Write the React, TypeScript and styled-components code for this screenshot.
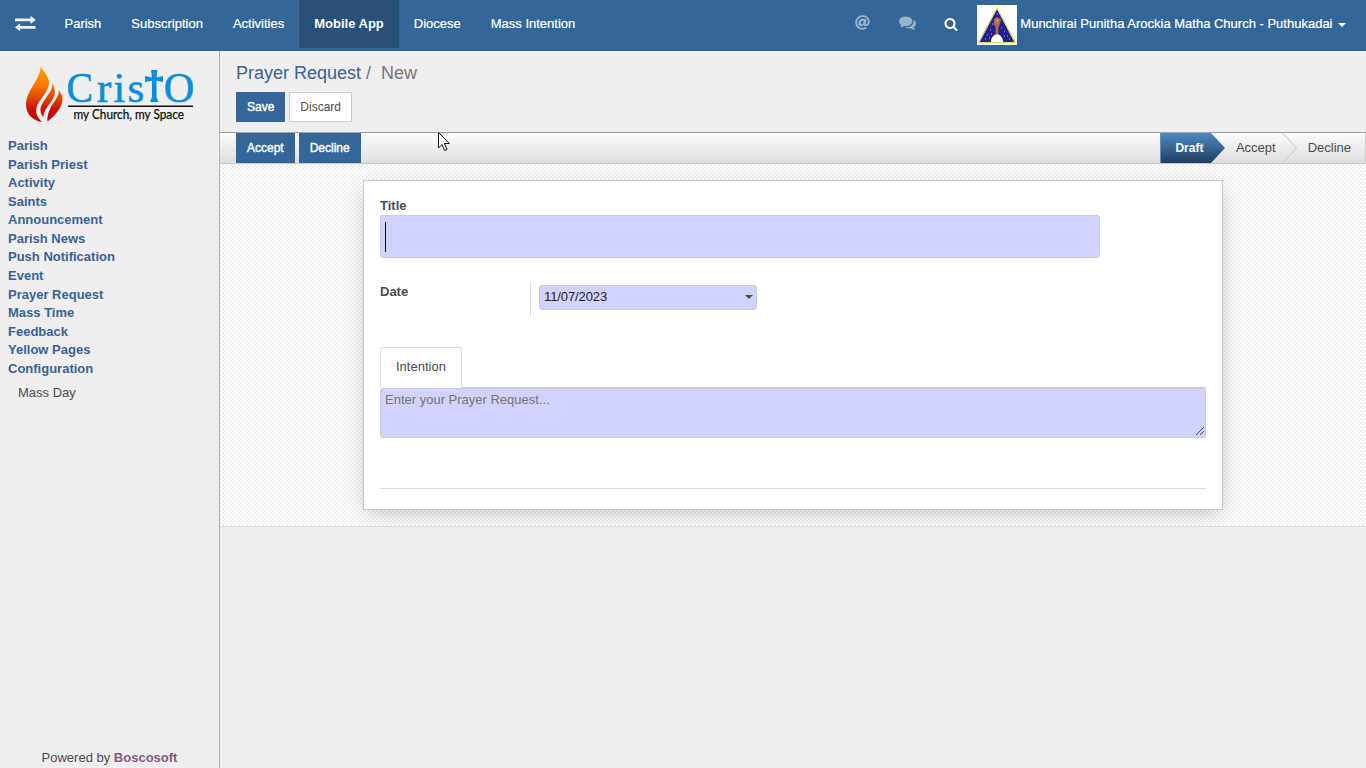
import React from "react";
import styled, { createGlobalStyle, css } from "styled-components";
import { FaAt } from "react-icons/fa";

const Global = createGlobalStyle`
  *, *::before, *::after { box-sizing: border-box; }
  body {
    margin: 0;
    overflow: hidden;
    background: #f0eeee;
    font: 13px/1.42857 "Liberation Sans", Arial, sans-serif;
    color: #4c4c4c;
  }
`;

const Page = styled.div`
  display: flex;
  flex-direction: column;
  height: 768px;
`;

const Header = styled.header`
  display: flex;
  align-items: flex-start;
  height: 51px;
  flex: none;
  background: #336699;
  color: #fff;
`;

const SwitchButton = styled.div`
  display: flex;
  padding: 16px 13.5px 0 15px;
  height: 48px;
`;

const NavItem = styled.a<{ $active?: boolean }>`
  height: 48px;
  padding: 0 15px;
  line-height: 47px;
  white-space: nowrap;
  -webkit-text-stroke: ${(p) => (p.$active ? 0 : 0.2)}px;
  ${(p) => p.$active && css`background: #285078; font-weight: bold;`}
`;

const Tools = styled.div`
  display: flex;
  align-items: flex-start;
  margin-left: auto;
`;

const Tool = styled.span<{ $dim?: boolean; $gap: number; $top: number }>`
  display: flex;
  margin-right: ${(p) => p.$gap}px;
  padding-top: ${(p) => p.$top}px;
  opacity: ${(p) => (p.$dim ? 0.5 : 1)};
`;

const Avatar = styled.svg`
  display: block;
  margin-top: 5px;
`;

const UserName = styled.span`
  padding-left: 3.5px;
  line-height: 47px;
  white-space: nowrap;
  -webkit-text-stroke: 0.2px;
`;

const Caret = styled.span<{ $color: string }>`
  width: 0;
  height: 0;
  border: 4px solid transparent;
  border-top-color: ${(p) => p.$color};
  border-bottom: 0;
`;

const UserCaret = styled(Caret)`
  margin: 23px 20px 0 5.5px;
`;

const Body = styled.div`
  display: flex;
  flex: 1;
  min-height: 0;
`;

const Sidebar = styled.aside`
  display: flex;
  flex-direction: column;
  width: 220px;
  flex: none;
  border-right: 1px solid #afafb6;
`;

const Logo = styled.svg`
  display: block;
  flex: none;
`;

const Menu = styled.nav`
  display: flex;
  flex-direction: column;
  padding: 2px 8px 0;
`;

const MenuItem = styled.a`
  height: 18.57px;
  color: #36639a;
  font-weight: bold;
`;

const SubItem = styled.a`
  padding: 6px 10px 0;
`;

const Powered = styled.footer`
  margin-top: auto;
  text-align: center;
  b { color: #875a7b; }
`;

const Main = styled.main`
  flex: 1;
  display: flex;
  flex-direction: column;
  min-width: 0;
`;

const ControlPanel = styled.div`
  height: 82px;
  padding: 9px 16px 0;
  border-bottom: 1px solid #a2a2a2;
`;

const Breadcrumb = styled.div`
  display: flex;
  font-size: 18px;
  line-height: 26px;
  color: #777;
  white-space: pre;
  a { color: #36639a; }
`;

const Buttons = styled.div`
  display: flex;
  gap: 4px;
`;

const PanelButtons = styled(Buttons)`
  margin-top: 6px;
`;

const Button = styled.button<{ $plain?: boolean }>`
  height: 30px;
  padding: 0 10px;
  border: 1px solid ${(p) => (p.$plain ? "#ccc" : "#336699")};
  background: ${(p) => (p.$plain ? "#fff" : "#336699")};
  color: ${(p) => (p.$plain ? "#4c4c4c" : "#fff")};
  font: 12px/28px "Liberation Sans", Arial, sans-serif;
  -webkit-text-stroke: ${(p) => (p.$plain ? 0 : 0.4)}px;
`;

const StatusBar = styled.div`
  display: flex;
  justify-content: space-between;
  height: 31px;
  flex: none;
  padding-left: 16px;
  border-bottom: 1px solid #cacaca;
  background: linear-gradient(#fcfcfc, #dedede);
`;

const Stages = styled.div`
  display: flex;
  border-right: 1px solid #cacaca;
`;

const Stage = styled.span<{ $current?: boolean }>`
  line-height: 29px;
  padding: 0 14px 0 10px;
  ${(p) =>
    p.$current &&
    css`
      width: 51px;
      margin-right: -0.5px;
      padding: 0 0 0 14px;
      color: #fff;
      font-size: 12px;
      line-height: 30px;
      font-weight: bold;
      background: linear-gradient(#4e8ac4, #1f3f60);
      border-left: 1px solid #6b8fb3;
    `}
`;

const StageArrow = styled.svg<{ $overlap?: boolean }>`
  display: block;
  flex: none;
  margin: ${(p) => (p.$overlap ? "0 0 0 -8px" : "0 1px 0 0")};
`;

const SheetArea = styled.div`
  height: 363px;
  padding: 16px 143px 0;
  overflow: hidden;
  border-bottom: 1px solid #ddd;
  background: repeating-conic-gradient(#efefef 0 25%, #fff 0 50%) 0 0 / 4px 4px;
`;

const Sheet = styled.section`
  height: 330px;
  padding: 15px 16px;
  border: 1px solid #c8c8d3;
  background: #fff;
  box-shadow: 0 5px 20px -5px rgba(0, 0, 0, 0.28);
`;

const Label = styled.label`
  display: block;
  height: 19px;
  line-height: 20px;
  font-weight: bold;
`;

const TitleInput = styled.div`
  display: flex;
  align-items: center;
  width: 720px;
  height: 43px;
  padding: 1px 0 0 4px;
  border: 1px solid #ccc;
  border-radius: 3px;
  background: #d2d2ff;
`;

const TextCursor = styled.i`
  width: 1px;
  height: 30px;
  background: #111;
`;

const FieldRow = styled.div`
  display: flex;
  margin-top: 24px;
  height: 35px;
`;

const LabelCell = styled.div`
  width: 151px;
  height: 35px;
  border-right: 1px solid #ddd;
`;

const DateInput = styled.div`
  display: flex;
  align-items: center;
  justify-content: space-between;
  width: 218px;
  height: 25px;
  margin: 3px 0 0 8px;
  padding: 0 3px 1px 4px;
  border: 1px solid #ccc;
  border-radius: 3px;
  background: #d2d2ff;
  color: #1f1f1f;
  letter-spacing: -0.1px;
`;

const Tabs = styled.div`
  display: flex;
  margin-top: 30px;
  height: 41px;
  border-bottom: 1px solid #ccc;
`;

const Tab = styled.div`
  width: 82px;
  height: 41px;
  padding-left: 15px;
  border: 1px solid #ddd;
  border-bottom-color: #fff;
  border-radius: 3px 3px 0 0;
  background: #fff;
  line-height: 38px;
`;

const TextBox = styled.div`
  display: flex;
  justify-content: space-between;
  align-items: flex-end;
  height: 50px;
  padding: 0 0 0 4px;
  border: 1px solid #ccc;
  border-radius: 3px;
  background: #d2d2ff;
  color: #757575;
`;

const Placeholder = styled.span`
  align-self: flex-start;
  padding-top: 2px;
`;

const Rule = styled.hr`
  margin: 50px 0 0;
  border: 0;
  border-top: 1px solid #ddd;
`;

const Pointer = styled.svg`
  position: absolute;
  left: 438px;
  top: 132px;
`;

const menu = [
  "Parish", "Parish Priest", "Activity", "Saints", "Announcement", "Parish News",
  "Push Notification", "Event", "Prayer Request", "Mass Time", "Feedback",
  "Yellow Pages", "Configuration",
];

const nav = ["Parish", "Subscription", "Activities", "Mobile App", "Diocese", "Mass Intention"];

function CristoLogo() {
  return (
    <Logo width="219" height="84" viewBox="0 51 219 84">
      <defs>
        <linearGradient id="flame" gradientUnits="userSpaceOnUse" x1="0" y1="66" x2="0" y2="122">
          <stop offset="0" stopColor="#ffa000" />
          <stop offset=".35" stopColor="#f97b00" />
          <stop offset=".8" stopColor="#c80d00" />
          <stop offset="1" stopColor="#b80000" />
        </linearGradient>
      </defs>
      <g fill="url(#flame)">
        <path d="M40.500 66C42 77 26 91 26 104.500C26 115 34 121 42 122C37 117 35.500 113 36.500 108C38 100 49 92 49 83C49 76 44 73 40.500 66Z" />
        <path d="M52 83C54 92 40.500 101 40.500 110C40.500 113 42 116 43.500 116.500C43 108 55 101 55 92C55 88 53.500 86 52 83Z" />
        <path d="M58.500 90C61 98 46.500 106 47.500 121.500C52 118 62.500 109 62.500 99C62.500 95 60.500 93 58.500 90Z" />
      </g>
      <g fill="#078fdf" stroke="#078fdf" strokeWidth=".6" fontFamily="'Liberation Serif', 'Times New Roman', serif">
        <text y="101.700" fontSize="42.500" x="66.500" textLength="26.500" lengthAdjust="spacingAndGlyphs">C</text>
        <text y="101.700" fontSize="43" x="97">r</text>
        <text y="101.700" fontSize="42" x="113.500">i</text>
        <text y="101.700" fontSize="43" x="127.500">s</text>
        <text y="101.700" fontSize="42.500" x="163.800" textLength="30.500" lengthAdjust="spacingAndGlyphs">O</text>
      </g>
      <path fill="#078fdf" d="M151 70H157.500L156.500 77.500L163 76V82L156.500 80.700V97L158.500 102H150L152 97V80.700L145 82V76L152 77.500Z" />
      <path d="M68 106.300H193" stroke="#111" strokeWidth="1.400" />
      <text x="73.500" y="119" fill="#111" fontSize="12.500" fontFamily="Lato, sans-serif" textLength="110.500" lengthAdjust="spacingAndGlyphs" stroke="#111" strokeWidth=".25">my Church, my Space</text>
    </Logo>
  );
}

function ChurchAvatar() {
  return (
    <Avatar width="40" height="40" viewBox="0 0 40 40">
      <rect width="40" height="40" fill="#fff" />
      <path d="M20 3L38.500 37.800H1.500Z" fill="#23208d" stroke="#eadc72" strokeWidth="1.400" />
      <path d="M17 14L20 12L24 14L23 19L21.500 22V30H18.500V22L16.500 19Z" fill="#b5624a" />
      <path d="M19 14L22 15L20 19Z" fill="#d98c67" />
      <path d="M14 37C14 27 26 27 26 37Z" fill="#fff" />
      <path d="M15 19h1M13 25h1M10 30h1M14 29h1M24 23h1M27 26h1M30 31h1M27 31h1M8 34h1M32 34h1M20 9h1M12 33h1" stroke="#aab2ec" />
    </Avatar>
  );
}

export default function App() {
  return (
    <Page>
      <Global />
      <Header>
        <SwitchButton>
          <svg width="21" height="15" viewBox="0 0 21 15" fill="#eef3f8">
            <path d="M.3 2.400H15.500V.5Q15.700 0 16.200.3L20.300 3.500Q20.600 3.900 20.300 4.300L16.200 7.400Q15.700 7.600 15.500 7.200V5.300H.3Q0 5.300 0 5V2.700Q0 2.400 .3 2.400Z" />
            <path d="M20.200 9.900H5.200V8Q5 7.500 4.500 7.700L.4 10.900Q.1 11.300 .4 11.700L4.500 14.800Q5 15 5.200 14.600V12.800H20.200Q20.500 12.800 20.500 12.500V10.200Q20.500 9.900 20.200 9.900Z" />
          </svg>
        </SwitchButton>
        {nav.map((n) => <NavItem key={n} $active={n === "Mobile App"}>{n}</NavItem>)}
        <Tools>
          <Tool $dim $gap={28.5} $top={15}><FaAt size={15} /></Tool>
          <Tool $dim $gap={28} $top={14}>
            <svg width="17" height="17" viewBox="0 0 1792 1792" fill="#fff">
              <path d="M1408 768q0 139-94 257t-256.500 186.500-353.500 68.500q-86 0-176-16-124 88-278 128-36 9-86 16h-3q-11 0-20.500-8t-11.500-21q-1-3-1-6.500t.5-6.500 2-6l2.500-5 3.500-5.500 4-5 4.500-5 4-4.500q5-6 23-25t26-29.500 22.500-29 25-38.500 20.500-44q-124-72-195-177t-71-224q0-139 94-257t256.500-186.500 353.500-68.500 353.500 68.500 256.500 186.500 94 257zm384 256q0 120-71 224.500t-195 176.500q10 24 20.500 44t25 38.500 22.500 29 26 29.500 23 25q1 1 4 4.500t4.500 5 4 5 3.500 5.500l2.500 5 2 6 .5 6.500-1 6.500q-3 14-13 22t-22 7q-50-7-86-16-154-40-278-128-90 16-176 16-271 0-472-132 58 4 88 4 161 0 309-45t264-129q125-92 192-212t67-254q0-77-23-152 129 71 204 178t75 230z" />
            </svg>
          </Tool>
          <Tool $gap={19} $top={17}>
            <svg width="14" height="14" viewBox="0 0 1792 1792" fill="#fff">
              <path d="M1216 832q0-185-131.500-316.500t-316.500-131.500-316.500 131.500-131.500 316.500 131.500 316.500 316.500 131.500 316.500-131.500 131.500-316.500zm512 832q0 52-38 90t-90 38q-54 0-90-38l-343-342q-179 124-399 124-143 0-273.500-55.500t-225-150-150-225-55.500-273.500 55.500-273.500 150-225 225-150 273.500-55.500 273.500 55.500 225 150 150 225 55.500 273.500q0 220-124 399l343 343q37 37 37 90z" />
            </svg>
          </Tool>
          <ChurchAvatar />
          <UserName>Munchirai Punitha Arockia Matha Church - Puthukadai</UserName>
          <UserCaret $color="#fff" />
        </Tools>
      </Header>
      <Body>
        <Sidebar>
          <CristoLogo />
          <Menu>
            {menu.map((m) => <MenuItem key={m}>{m}</MenuItem>)}
            <SubItem>Mass Day</SubItem>
          </Menu>
          <Powered>Powered by <b>Boscosoft</b></Powered>
        </Sidebar>
        <Main>
          <ControlPanel>
            <Breadcrumb><a>Prayer Request</a><span> /  New</span></Breadcrumb>
            <PanelButtons>
              <Button>Save</Button>
              <Button $plain>Discard</Button>
            </PanelButtons>
          </ControlPanel>
          <StatusBar>
            <Buttons>
              <Button>Accept</Button>
              <Button>Decline</Button>
            </Buttons>
            <Stages>
              <Stage $current>Draft</Stage>
              <StageArrow width="14" height="30">
                <defs>
                  <linearGradient id="stage" gradientUnits="userSpaceOnUse" x1="0" y1="0" x2="0" y2="30">
                    <stop offset="0" stopColor="#4e8ac4" />
                    <stop offset="1" stopColor="#1f3f60" />
                  </linearGradient>
                </defs>
                <path d="M0 0L14 15L0 30Z" fill="url(#stage)" />
              </StageArrow>
              <Stage>Accept</Stage>
              <StageArrow $overlap width="16" height="30">
                <path d="M.5 0L14.500 15L.5 30" fill="none" stroke="#c4c4c4" />
              </StageArrow>
              <Stage>Decline</Stage>
            </Stages>
          </StatusBar>
          <SheetArea>
            <Sheet>
              <Label>Title</Label>
              <TitleInput><TextCursor /></TitleInput>
              <FieldRow>
                <LabelCell><Label>Date</Label></LabelCell>
                <DateInput>11/07/2023<Caret $color="#4c4c4c" /></DateInput>
              </FieldRow>
              <Tabs><Tab>Intention</Tab></Tabs>
              <TextBox>
                <Placeholder>Enter your Prayer Request...</Placeholder>
                <svg width="10" height="10" shapeRendering="crispEdges"><path d="M.5 8.500L8.500.5M4.500 8.500L8.500 4.500" stroke="#45455e" /></svg>
              </TextBox>
              <Rule />
            </Sheet>
          </SheetArea>
        </Main>
      </Body>
      <Pointer width="13" height="20" viewBox="0 0 13 20">
        <path d="M.5.5V16L4 12.500L6.500 18.500L9 17.500L6.500 11.500H11.500Z" fill="#fff" stroke="#15151f" />
      </Pointer>
    </Page>
  );
}
